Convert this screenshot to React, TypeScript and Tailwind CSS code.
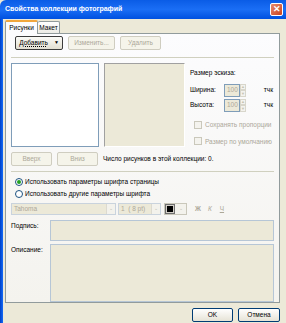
import React from 'react';

const XpButton: React.FC<{ label: string; w: string; disabled?: boolean; focus?: boolean; arrow?: boolean }> = ({ label, w, disabled, focus, arrow }) => (
  <div
    className={`${w} h-[14px] flex items-center justify-center rounded-[2px] border text-[6.5px] whitespace-nowrap ${
      disabled
        ? 'border-[#cfcdc0] bg-[#f5f4ea] text-[#aca899]'
        : focus
        ? 'border-[#3c3c3c] bg-gradient-to-b from-[#fbfbf8] to-[#e2dfd2] text-black'
        : 'border-[#003c74] bg-gradient-to-b from-[#ffffff] to-[#e6e3d6] text-black'
    }`}
  >
    <span className={focus ? 'underline decoration-dotted' : ''}>{label}</span>
    {arrow && <span className="ml-[6px] text-[5px]">▼</span>}
  </div>
);

const Spin: React.FC = () => (
  <div className="flex h-[13px]">
    <div className="w-[16px] h-full border border-[#7f9db9] bg-[#ece9d8] text-[#aca899] text-[6.5px] flex items-center pl-[2px]">100</div>
    <div className="w-[6px] h-full flex flex-col">
      <div className="flex-1 bg-[#f4f3ee] border border-[#d8d6cb] text-[4px] text-[#c5c2b2] leading-none flex items-center justify-center">▲</div>
      <div className="flex-1 bg-[#f4f3ee] border border-[#d8d6cb] text-[4px] text-[#c5c2b2] leading-none flex items-center justify-center">▼</div>
    </div>
  </div>
);

const Check: React.FC<{ label: string }> = ({ label }) => (
  <div className="flex items-center gap-[3px] text-[#aca899] text-[6.5px] whitespace-nowrap">
    <div className="w-[8px] h-[8px] shrink-0 border border-[#cac8bb] bg-[#f4f3ee]" />
    <span>{label}</span>
  </div>
);

const Radio: React.FC<{ label: string; checked?: boolean }> = ({ label, checked }) => (
  <div className="flex items-center gap-[2px] text-[6.5px] text-black whitespace-nowrap">
    <div className="w-[8px] h-[8px] rounded-full border border-[#1c5180] bg-white flex items-center justify-center">
      {checked && <div className="w-[4px] h-[4px] rounded-full bg-[#21a121]" />}
    </div>
    <span>{label}</span>
  </div>
);

const Combo: React.FC<{ label: string; w: string }> = ({ label, w }) => (
  <div className={`${w} h-[12px] border border-[#c9d3dd] bg-[#ece9d8] flex`}>
    <span className="flex-1 pl-[2px] text-[6.5px] text-[#aca899] leading-[10px] whitespace-pre">{label}</span>
    <div className="w-[9px] h-full bg-[#f3f2ec] border-l border-[#dcdad0] flex items-center justify-center text-[5px] text-[#bdbbb0]">⌄</div>
  </div>
);

export default function App() {
  return (
    <div className="w-[286px] h-[323px] bg-[#ece9d8] overflow-hidden flex flex-col" style={{ fontFamily: '"Liberation Sans", Arial, sans-serif' }}>
      {/* title bar */}
      <div className="h-[19px] shrink-0 bg-gradient-to-b from-[#0a5ce6] via-[#1a6ef5] to-[#0050e0] flex items-center pl-[5px] pr-[3px] rounded-tl-[6px]">
        <span className="flex-1 text-white font-bold text-[7px]">Свойства коллекции фотографий</span>
        <div className="w-[13px] h-[13px] rounded-[2px] border border-white bg-gradient-to-br from-[#e98a6b] to-[#c9401b] flex items-center justify-center text-white text-[9px] font-bold leading-none">✕</div>
      </div>

      <div className="flex flex-1">
        <div className="w-[3px] bg-gradient-to-r from-[#0040c8] to-[#166af7]" />
        <div className="flex-1 flex flex-col pl-[2px] pr-[6px]">
          {/* tabs */}
          <div className="h-[14px] flex items-end">
            <div className="h-[14px] w-[33px] bg-[#fcfcfe] border-x border-[#919b9c] border-t-[2px] border-t-[#f2a73c] rounded-t-[2px] text-[6.5px] flex items-center justify-center relative z-10 -mb-[1px]">Рисунки</div>
            <div className="h-[12px] w-[22px] bg-gradient-to-b from-[#ffffff] to-[#ecebe5] border-r border-t border-[#919b9c] rounded-t-[2px] text-[6.5px] flex items-center justify-center">Макет</div>
          </div>

          {/* panel */}
          <div className="h-[270px] border border-[#919b9c] bg-gradient-to-b from-[#fcfcfe] to-[#f4f3ee] flex flex-col px-[5px]">
            <div className="flex gap-[5px] mt-[2px] pl-[4px]">
              <XpButton label="Добавить" w="w-[48px]" focus arrow />
              <XpButton label="Изменить..." w="w-[47px]" disabled />
              <XpButton label="Удалить" w="w-[41px]" disabled />
            </div>
            <div className="h-[1px] bg-[#d0d0bf] mt-[7px]" />

            <div className="flex mt-[5px] h-[84px]">
              <div className="w-[88px] h-full border border-[#7f9db9] bg-white" />
              <div className="w-[81px] h-full ml-[5px] border border-[#a0a0a0] border-r-white border-b-white bg-[#ece9d8]" />
              <div className="flex-1 pl-[5px] pt-[5px] flex flex-col text-[6.5px]">
                <span>Размер эскиза:</span>
                <div className="flex items-center mt-[6px]">
                  <span className="w-[34px]">Ширина:</span>
                  <Spin />
                  <span className="ml-auto mr-[1px]">тчк</span>
                </div>
                <div className="flex items-center mt-[2px]">
                  <span className="w-[34px]">Высота:</span>
                  <Spin />
                  <span className="ml-auto mr-[1px]">тчк</span>
                </div>
                <div className="pl-[4px] mt-[8px] flex flex-col gap-[7px]">
                  <Check label="Сохранять пропорции" />
                  <Check label="Размер по умолчанию" />
                </div>
              </div>
            </div>

            <div className="flex items-center gap-[5px] mt-[5px]">
              <XpButton label="Вверх" w="w-[41px]" disabled />
              <XpButton label="Вниз" w="w-[41px]" disabled />
              <span className="text-[6.5px] whitespace-nowrap">Число рисунков в этой коллекции: 0.</span>
            </div>

            <div className="h-[1px] bg-[#d0d0bf] mt-[5px]" />

            <div className="flex flex-col gap-[2px] mt-[5px] pl-[4px]">
              <Radio label="Использовать параметры шрифта страницы" checked />
              <Radio label="Использовать другие параметры шрифта" />
            </div>

            <div className="flex items-center gap-[2px] mt-[4px]">
              <Combo label="Tahoma" w="w-[105px]" />
              <Combo label="1  ( 8 pt)" w="w-[43px]" />
              <div className="w-[23px] h-[12px] border border-[#c9c7ba] bg-[#f3f2ec] flex items-center ml-[1px]">
                <div className="w-[10px] h-[10px] border border-[#6e6e6e] bg-[#d4d0c8] flex items-center justify-center">
                  <div className="w-[6px] h-[6px] bg-black" />
                </div>
                <span className="flex-1 text-center text-[5px] text-[#bdbbb0]">⌄</span>
              </div>
              <span className="ml-[6px] text-[6.5px] font-bold text-[#aca899]">Ж</span>
              <span className="ml-[5px] text-[6.5px] italic text-[#aca899]">К</span>
              <span className="ml-[6px] text-[6.5px] underline text-[#aca899]">Ч</span>
            </div>

            <div className="flex mt-[5px]">
              <span className="w-[39px] text-[6.5px] pt-[1px]">Подпись:</span>
              <div className="flex-1 h-[21px] border border-[#b6c6d6] bg-[#ece9d8]" />
            </div>
            <div className="flex mt-[3px]">
              <span className="w-[39px] text-[6.5px] pt-[1px]">Описание:</span>
              <div className="flex-1 h-[58px] border border-[#b6c6d6] bg-[#ece9d8]" />
            </div>
          </div>

          <div className="flex justify-end gap-[5px] mt-[5px]">
            <XpButton label="OK" w="w-[41px]" />
            <XpButton label="Отмена" w="w-[42px]" />
          </div>
        </div>
      </div>
    </div>
  );
}
